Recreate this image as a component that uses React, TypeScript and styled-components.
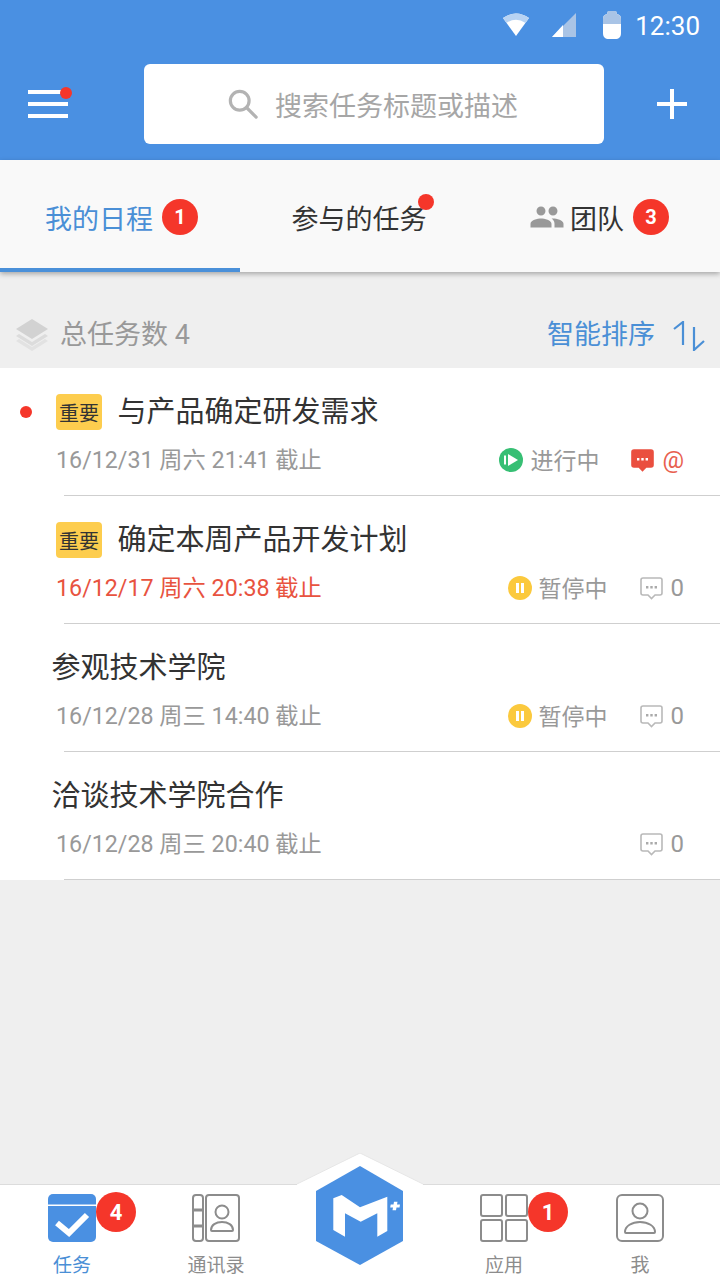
import styled, { createGlobalStyle } from "styled-components";
import { MdGroup } from "react-icons/md";

const GlobalStyle = createGlobalStyle`
  html, body {
    margin: 0;
    padding: 0;
  }
  body {
    font-family: Roboto, "Noto Sans CJK SC", sans-serif;
    background: #efefef;
  }
`;

const Page = styled.div`
  width: 720px;
  height: 1280px;
  display: flex;
  flex-direction: column;
  overflow: hidden;
  background: #efefef;
`;

const Header = styled.header`
  height: 160px;
  background: #4a90e2;
  flex-shrink: 0;
`;

const StatusBar = styled.div`
  height: 52px;
  box-sizing: border-box;
  display: flex;
  align-items: center;
  justify-content: flex-end;
  padding: 0 20px 3px 0;
  color: #fff;
  font-size: 26px;
`;

const Clock = styled.span`
  margin-left: 14px;
  padding-top: 3px;
`;

const SignalWrap = styled.svg`
  margin-left: 23px;
`;

const BatteryWrap = styled.svg`
  margin-left: 27px;
`;

const SearchRow = styled.div`
  display: flex;
  align-items: center;
  height: 80px;
  margin-top: 12px;
  padding-left: 28px;
`;

const MenuButton = styled.div`
  position: relative;
  width: 40px;
  height: 28px;
  display: flex;
  flex-direction: column;
  justify-content: space-between;
  margin-right: 76px;
`;

const MenuBar = styled.span`
  display: block;
  height: 4px;
  background: #fff;
`;

const MenuDot = styled.span`
  position: absolute;
  top: -3px;
  right: -4px;
  width: 12px;
  height: 12px;
  border-radius: 50%;
  background: #f5362a;
`;

const SearchBox = styled.div`
  width: 460px;
  height: 80px;
  background: #fff;
  border-radius: 6px;
  display: flex;
  align-items: center;
  padding-left: 84px;
  box-sizing: border-box;
  color: #a6a6a6;
  font-size: 27px;
  gap: 17px;
`;

const AddIcon = styled.svg`
  margin-left: 53px;
`;

const Tabs = styled.nav`
  position: relative;
  height: 112px;
  display: grid;
  grid-template-columns: repeat(3, 240px);
  background: #f9f9f9;
  box-shadow: 0 2px 5px rgba(0, 0, 0, 0.3);
  flex-shrink: 0;
`;

const Tab = styled.div<{ $active?: boolean }>`
  display: flex;
  align-items: center;
  justify-content: center;
  gap: 9px;
  height: 112px;
  box-sizing: border-box;
  padding: ${(p) => (p.$active ? "6px 0 0 3px" : "6px 2px 0 0")};
  font-size: 27px;
  color: ${(p) => (p.$active ? "#4a8fd6" : "#333")};
  border-bottom: 4px solid ${(p) => (p.$active ? "#4a90d9" : "transparent")};
`;

const TabLabel = styled.span`
  position: relative;
`;

const TabDot = styled.span`
  position: absolute;
  top: -4px;
  right: -7px;
  width: 16px;
  height: 16px;
  border-radius: 50%;
  background: #f5362a;
`;

const TabBadge = styled.span`
  width: 36px;
  height: 36px;
  border-radius: 50%;
  background: #f5362a;
  color: #fff;
  font-size: 20px;
  font-weight: 700;
  display: flex;
  align-items: center;
  justify-content: center;
`;

const TeamIcon = styled(MdGroup)`
  margin-right: -4px;
  color: #999;
`;

const Summary = styled.div`
  height: 72px;
  margin-top: 24px;
  display: flex;
  align-items: center;
  justify-content: space-between;
  padding: 6px 15px 0 16px;
  box-sizing: border-box;
  flex-shrink: 0;
`;

const SummaryLeft = styled.div`
  display: flex;
  align-items: center;
  gap: 12px;
  color: #999;
  font-size: 27px;
`;

const SortLink = styled.div`
  display: flex;
  align-items: center;
  gap: 18px;
  color: #4a8fd6;
  font-size: 27px;

  svg {
    margin-top: 2px;
  }
`;

const SummaryText = styled.span`
  padding-bottom: 6px;
`;

const TaskList = styled.section`
  background: #fff;
  flex-shrink: 0;
`;

const TaskRow = styled.article`
  position: relative;
  height: 127px;
  box-sizing: border-box;
  padding-top: 23px;
`;

const UnreadDot = styled.span`
  position: absolute;
  left: 20px;
  top: 38px;
  width: 12px;
  height: 12px;
  border-radius: 50%;
  background: #f5362a;
`;

const TitleLine = styled.div<{ $tagged?: boolean }>`
  display: flex;
  align-items: center;
  gap: 15.5px;
  height: 40px;
  padding-left: ${(p) => (p.$tagged ? "56px" : "51.5px")};
  color: #333;
  font-size: 29px;
`;

const TitleText = styled.span`
  padding-bottom: 4px;
`;

const Tag = styled.span`
  width: 46px;
  height: 36px;
  margin-top: 2px;
  border-radius: 4px;
  background: #fdcd4e;
  color: #333;
  font-size: 20px;
  display: flex;
  align-items: center;
  justify-content: center;
`;

const MetaLine = styled.div`
  display: flex;
  align-items: center;
  justify-content: space-between;
  height: 36px;
  margin-top: 11px;
  padding: 0 36px 0 56px;
`;

const Deadline = styled.span<{ $late?: boolean }>`
  font-size: 23.25px;
  padding-bottom: 4px;
  color: ${(p) => (p.$late ? "#e8533f" : "#999")};
`;

const MetaRight = styled.div`
  display: flex;
  align-items: center;
  gap: 32px;
`;

const StatusTag = styled.span`
  display: flex;
  align-items: center;
  gap: 7px;
  color: #999;
  font-size: 23px;
`;

const StatusText = styled.span`
  padding-bottom: 2px;
`;

const CommentTag = styled.span<{ $alert?: boolean }>`
  display: flex;
  align-items: center;
  gap: 8px;
  font-size: 24px;
  color: ${(p) => (p.$alert ? "#e8604f" : "#999")};
`;

const Rule = styled.div`
  height: 1px;
  margin-left: 64px;
  background: #cfcfcf;
`;

const Spacer = styled.div`
  flex: 1;
`;

const BottomNav = styled.footer`
  position: relative;
  height: 96px;
  box-sizing: border-box;
  background: #fff;
  border-top: 1px solid #dcdcdc;
  display: grid;
  grid-template-columns: repeat(4, 144px) 128px;
  flex-shrink: 0;
`;

const NavItem = styled.div<{ $active?: boolean }>`
  display: flex;
  flex-direction: column;
  align-items: center;
  padding-top: 9px;
  font-size: 19px;
  color: ${(p) => (p.$active ? "#4a8fd6" : "#8c8c8c")};
`;

const NavIconWrap = styled.div`
  position: relative;
  width: 48px;
  height: 48px;
  margin-bottom: 8px;
`;

const NavBadge = styled.span`
  position: absolute;
  left: 48px;
  top: -2px;
  width: 40px;
  height: 40px;
  border-radius: 50%;
  background: #f5362a;
  color: #fff;
  font-size: 22px;
  font-weight: 700;
  display: flex;
  align-items: center;
  justify-content: center;
`;

const LogoSvg = styled.svg`
  position: absolute;
  left: 297px;
  top: -32px;
`;

const WifiIcon = () => (
  <svg width="26" height="24" viewBox="0 0 26 24">
    <path d="M0 5 Q13 -4 26 5 L13 23Z" fill="#fff" />
    <path d="M0 5 Q13 -4 26 5 L22.500 10 Q13 3.500 3.500 10Z" fill="#b7d3f3" />
  </svg>
);

const SignalIcon = () => (
  <SignalWrap width="24" height="24" viewBox="0 0 24 24">
    <path d="M24 0V24H0Z" fill="#a9c4e6" />
    <path d="M11 12V24H0Z" fill="#fff" />
  </SignalWrap>
);

const BatteryIcon = () => (
  <BatteryWrap width="18" height="28" viewBox="0 0 18 28">
    <path d="M5 0h8l1 3c3 1 4 2 4 5v14c0 4-2 6-6 6H6c-4 0-6-2-6-6V8c0-3 1-4 4-5Z" fill="#fff" />
    <path d="M5 0h8l1 3c3 1 4 2 4 5v5H0V8c0-3 1-4 4-5Z" fill="#a9c4e6" />
  </BatteryWrap>
);

const SearchIcon = () => (
  <svg width="30" height="30" viewBox="0 0 32 32" fill="none" stroke="#b3b3b3" strokeWidth="3.4">
    <circle cx="12.5" cy="12.5" r="10" />
    <path d="M20 20l10 10" strokeLinecap="round" />
  </svg>
);

const LayersIcon = () => (
  <svg width="32" height="32" viewBox="0 0 32 32">
    <path d="M16 0L32 10 16 20 0 10Z" fill="#d2d2d2" />
    <path d="M3 15L0 17 16 27 32 17 29 15 16 23Z" fill="#dcdcdc" />
    <path d="M3 20L0 22 16 32 32 22 29 20 16 28Z" fill="#e2e2e2" />
  </svg>
);

const SortIcon = () => (
  <svg width="32" height="30" viewBox="0 0 32 30" fill="none" stroke="#4a8fd6" strokeWidth="2.2">
    <path d="M1 8L10 1V24" />
    <path d="M21 6V29L31 20" />
  </svg>
);

const PlayIcon = () => (
  <svg width="24" height="24" viewBox="0 0 24 24">
    <circle cx="12" cy="12" r="12" fill="#37bf74" />
    <path d="M5 7.500h2v9H5Z" fill="#fff" />
    <path d="M9 6l10 6-10 6Z" fill="#fff" />
  </svg>
);

const PauseIcon = () => (
  <svg width="24" height="24" viewBox="0 0 24 24">
    <circle cx="12" cy="12" r="12" fill="#fbc93d" />
    <path d="M8 7h3v10H8ZM13 7h3v10h-3Z" fill="#fff" />
  </svg>
);

const CommentIcon = ({ solid }: { solid?: boolean }) => (
  <svg width="23" height="24" viewBox="0 0 23 24">
    <path
      d="M3 2h17a2 2 0 0 1 2 2v13a2 2 0 0 1-2 2h-5l-3.500 3.500L8 19H3a2 2 0 0 1-2-2V4a2 2 0 0 1 2-2Z"
      fill={solid ? "#ea4f3f" : "#fff"}
      stroke={solid ? "#ea4f3f" : "#b9b9b9"}
      strokeWidth="1.6"
    />
    <path d="M6 10h2.400v2.400H6ZM10.300 10h2.400v2.400h-2.400ZM14.600 10H17v2.400h-2.400Z" fill={solid ? "#fff" : "#aaa"} />
  </svg>
);

const TaskIcon = () => (
  <svg width="48" height="48" viewBox="0 0 48 48">
    <path d="M5 0h38a5 5 0 0 1 5 5v5.500H0V5a5 5 0 0 1 5-5Z" fill="#4a90e2" />
    <path d="M0 12h48v31a5 5 0 0 1-5 5H5a5 5 0 0 1-5-5Z" fill="#4a90e2" />
    <path d="M9 29l12 10 18-18" fill="none" stroke="#fff" strokeWidth="6" />
  </svg>
);

const ContactsIcon = () => (
  <svg width="48" height="48" viewBox="0 0 48 48" fill="none" stroke="#8c8c8c" strokeWidth="2">
    <rect x="1" y="1" width="10" height="46" rx="3" />
    <path d="M1 16h10M1 32h10" strokeWidth="3" />
    <rect x="14" y="1" width="33" height="46" rx="3" />
    <circle cx="30" cy="18" r="6.500" />
    <path d="M19 36c0-5 5-8 11-8s11 3 11 8c0 .6-.4 1-1 1H20c-.6 0-1-.4-1-1Z" />
  </svg>
);

const AppsIcon = () => (
  <svg width="48" height="48" viewBox="0 0 48 48" fill="none" stroke="#8c8c8c" strokeWidth="2">
    <rect x="1" y="1" width="21" height="21" rx="2" />
    <rect x="26" y="1" width="21" height="21" rx="2" />
    <rect x="1" y="26" width="21" height="21" rx="2" />
    <rect x="26" y="26" width="21" height="21" rx="2" />
  </svg>
);

const ProfileIcon = () => (
  <svg width="48" height="48" viewBox="0 0 48 48" fill="none" stroke="#8c8c8c" strokeWidth="2">
    <rect x="1" y="1" width="46" height="46" rx="5" />
    <circle cx="24" cy="17" r="7.500" />
    <path d="M9 38c0-6 7-10 15-10s15 4 15 10c0 .6-.4 1-1 1H10c-.6 0-1-.4-1-1Z" />
  </svg>
);

const Logo = () => (
  <LogoSvg width="126" height="118" viewBox="0 0 126 118">
    <path d="M0 31L63 0l63 31v87H0Z" fill="#fff" />
    <path d="M0 31L63 0l63 31" fill="none" stroke="#e6e6e6" strokeWidth="1" />
    <path d="M63 13l43 25v50L63 112 19 88V38Z" fill="#4a90e2" />
    <path d="M36.300 45.300L44.700 42 63 54.300 90.300 43.700V78L80.300 83.700V60.300L63.700 68.700 48 60.300V83.700L36.300 77Z" fill="#fff" />
    <path d="M97 48.700h3.500l-.5 2.800h3l-.5 3h-3l-.5 2.800h-3.500l.5-2.800h-2.800l.5-3h2.800Z" fill="#fff" />
  </LogoSvg>
);

type Task = {
  title: string;
  due: string;
  important?: boolean;
  unread?: boolean;
  late?: boolean;
  status?: "running" | "paused";
  mention?: boolean;
};

const tasks: Task[] = [
  { title: "与产品确定研发需求", due: "16/12/31 周六 21:41 截止", important: true, unread: true, status: "running", mention: true },
  { title: "确定本周产品开发计划", due: "16/12/17 周六 20:38 截止", important: true, late: true, status: "paused" },
  { title: "参观技术学院", due: "16/12/28 周三 14:40 截止", status: "paused" },
  { title: "洽谈技术学院合作", due: "16/12/28 周三 20:40 截止" },
];

export default function App() {
  return (
    <Page>
      <GlobalStyle />
      <Header>
        <StatusBar>
          <WifiIcon />
          <SignalIcon />
          <BatteryIcon />
          <Clock>12:30</Clock>
        </StatusBar>
        <SearchRow>
          <MenuButton>
            <MenuBar />
            <MenuBar />
            <MenuBar />
            <MenuDot />
          </MenuButton>
          <SearchBox>
            <SearchIcon />
            搜索任务标题或描述
          </SearchBox>
          <AddIcon width="30" height="30" viewBox="0 0 30 30">
            <path d="M13 0h4v13h13v4H17v13h-4V17H0v-4h13Z" fill="#fff" />
          </AddIcon>
        </SearchRow>
      </Header>

      <Tabs>
        <Tab $active>
          我的日程
          <TabBadge>1</TabBadge>
        </Tab>
        <Tab>
          <TabLabel>
            参与的任务
            <TabDot />
          </TabLabel>
        </Tab>
        <Tab>
          <TeamIcon size={36} />
          团队
          <TabBadge>3</TabBadge>
        </Tab>
      </Tabs>

      <Summary>
        <SummaryLeft>
          <LayersIcon />
          <SummaryText>总任务数 4</SummaryText>
        </SummaryLeft>
        <SortLink>
          <SummaryText>智能排序</SummaryText>
          <SortIcon />
        </SortLink>
      </Summary>

      <TaskList>
        {tasks.map((task) => (
          <div key={task.title}>
            <TaskRow>
              {task.unread && <UnreadDot />}
              <TitleLine $tagged={task.important}>
                {task.important && <Tag>重要</Tag>}
                <TitleText>{task.title}</TitleText>
              </TitleLine>
              <MetaLine>
                <Deadline $late={task.late}>{task.due}</Deadline>
                <MetaRight>
                  {task.status === "running" && (
                    <StatusTag>
                      <PlayIcon />
                      <StatusText>进行中</StatusText>
                    </StatusTag>
                  )}
                  {task.status === "paused" && (
                    <StatusTag>
                      <PauseIcon />
                      <StatusText>暂停中</StatusText>
                    </StatusTag>
                  )}
                  <CommentTag $alert={task.mention}>
                    <CommentIcon solid={task.mention} />
                    {task.mention ? "@" : "0"}
                  </CommentTag>
                </MetaRight>
              </MetaLine>
            </TaskRow>
            <Rule />
          </div>
        ))}
      </TaskList>

      <Spacer />

      <BottomNav>
        <NavItem $active>
          <NavIconWrap>
            <TaskIcon />
            <NavBadge>4</NavBadge>
          </NavIconWrap>
          任务
        </NavItem>
        <NavItem>
          <NavIconWrap>
            <ContactsIcon />
          </NavIconWrap>
          通讯录
        </NavItem>
        <div />
        <NavItem>
          <NavIconWrap>
            <AppsIcon />
            <NavBadge>1</NavBadge>
          </NavIconWrap>
          应用
        </NavItem>
        <NavItem>
          <NavIconWrap>
            <ProfileIcon />
          </NavIconWrap>
          我
        </NavItem>
        <Logo />
      </BottomNav>
    </Page>
  );
}
